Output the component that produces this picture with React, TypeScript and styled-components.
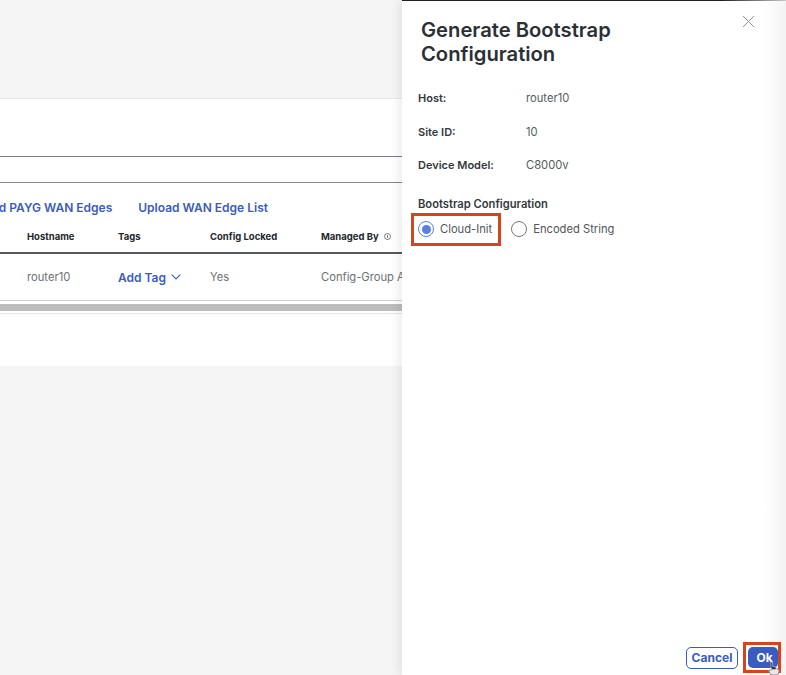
import React from "react";
import styled, { createGlobalStyle } from "styled-components";

const GlobalStyle = createGlobalStyle`
  html, body {
    margin: 0;
    padding: 0;
    background: #f5f5f5;
    font-family: Inter, "Liberation Sans", sans-serif;
  }
  * {
    box-sizing: border-box;
  }
`;

const Page = styled.div`
  display: flex;
  width: 786px;
  height: 675px;
  overflow: hidden;
  background: #f5f5f5;
`;

const Backdrop = styled.div`
  flex: 0 0 402px;
  width: 402px;
  padding-top: 98px;
  overflow: hidden;
`;

const Card = styled.section`
  height: 268px;
  background: #fff;
  border-top: 1px solid #e8e8e8;
`;

const FilterBar = styled.div`
  height: 27px;
  margin-top: 57px;
  border-top: 1px solid #777b90;
  border-bottom: 1px solid #85878f;
`;

const Toolbar = styled.div`
  display: flex;
  justify-content: flex-end;
  gap: 26px;
  width: 268px;
  margin-top: 17px;
  white-space: nowrap;
`;

const ToolLink = styled.a`
  font-size: 12px;
  font-weight: 600;
  line-height: 16px;
  color: #3a5bbf;
`;

const TableGrid = styled.div`
  display: grid;
  grid-template-columns: 27px 91px 92px 111px 150px;
  width: 471px;
`;

const HeadCell = styled.div`
  display: flex;
  align-items: center;
  gap: 5px;
  height: 38px;
  padding-top: 4px;
  font-size: 9.5px;
  font-weight: 700;
  color: #23282e;
  border-bottom: 2px solid #55585d;
  white-space: nowrap;
`;

const BodyCell = styled.div`
  display: flex;
  align-items: center;
  gap: 5px;
  height: 47px;
  font-size: 11.2px;
  color: #6b6f75;
  border-bottom: 1px solid #cfd0d2;
  white-space: nowrap;
`;

const TagLink = styled.span`
  font-size: 12px;
  font-weight: 600;
  color: #3a5bbf;
`;

const ScrollTrack = styled.div`
  height: 13px;
  padding-top: 3px;
  border-bottom: 1px solid #e6e6e6;
`;

const ScrollThumb = styled.div`
  height: 7px;
  background: #bdbdbd;
`;

const Panel = styled.aside`
  flex: 1;
  display: flex;
  flex-direction: column;
  position: relative;
  padding: 18px 0 2px 16px;
  background:
    linear-gradient(to right, #222 0, #222 320px, #c8c8c8 384px) top / 100% 1px no-repeat,
    linear-gradient(to right, #fff 0, #fff 362px, #f3f3f3 384px);
  box-shadow: -4px 0 9px rgba(0, 0, 0, 0.07);
`;

const CloseButton = styled.button`
  position: absolute;
  top: 15px;
  right: 31px;
  width: 13px;
  height: 13px;
  padding: 0;
  border: 0;
  background: none;
  color: #8d9095;
`;

const Title = styled.h2`
  width: 260px;
  margin: 0 0 25px 3px;
  font-size: 20.2px;
  font-weight: 600;
  line-height: 23.5px;
  color: #2b3036;
`;

const InfoRows = styled.dl`
  display: grid;
  grid-template-columns: 108px 1fr;
  grid-auto-rows: 33.5px;
  margin: 0;
  font-size: 11px;
  line-height: 16px;
`;

const InfoLabel = styled.dt`
  font-weight: 600;
  color: #33383e;
`;

const InfoValue = styled.dd`
  margin: 0;
  font-size: 11.2px;
  color: #555a60;
`;

const SectionLabel = styled.div`
  margin-top: 5px;
  font-size: 11.2px;
  font-weight: 600;
  line-height: 16px;
  color: #33383e;
`;

const RadioRow = styled.div`
  display: flex;
  align-items: center;
  gap: 3px;
  margin-top: 1px;
  margin-left: -7px;
`;

const RadioOption = styled.label<{ $marked?: boolean }>`
  display: flex;
  align-items: center;
  gap: 6px;
  height: 33px;
  padding: 0 6px 0 4px;
  font-size: 11.2px;
  color: #51565c;
  border: ${(p) => (p.$marked ? "3px solid #d8441a" : "3px solid transparent")};
`;

const RadioDot = styled.span<{ $checked?: boolean }>`
  position: relative;
  flex: 0 0 16px;
  width: 16px;
  height: 16px;
  border-radius: 50%;
  background: #fff;
  border: 1.5px solid ${(p) => (p.$checked ? "#5b7fe0" : "#72767f")};
  &::after {
    content: "";
    display: ${(p) => (p.$checked ? "block" : "none")};
    position: absolute;
    inset: 2.5px;
    border-radius: 50%;
    background: #5b7fe0;
  }
`;

const Footer = styled.footer`
  display: flex;
  align-items: center;
  justify-content: flex-end;
  gap: 5px;
  margin-top: auto;
  padding-right: 5px;
`;

const OutlineButton = styled.button`
  width: 52px;
  height: 22px;
  padding: 0;
  font: 700 12px Inter, "Liberation Sans", sans-serif;
  color: #3a5bbf;
  background: #fff;
  border: 1.5px solid #3a5bbf;
  border-radius: 5px;
`;

const PrimaryFrame = styled.div`
  position: relative;
  display: flex;
  align-items: center;
  justify-content: flex-end;
  width: 38px;
  height: 31px;
  border: 3px solid #d8441a;
`;

const PrimaryButton = styled.button`
  width: 30px;
  height: 21px;
  padding: 0 0 0 3px;
  font: 700 12px Inter, "Liberation Sans", sans-serif;
  color: #fff;
  background: #3a5bbf;
  border: 0;
  border-radius: 5px;
`;

const Cursor = styled.svg`
  position: absolute;
  top: 16px;
  left: 21px;
  width: 13px;
  height: 15px;
`;

const Chevron = () => (
  <svg width="10" height="6" viewBox="0 0 10 6" fill="none" stroke="#3a5bbf" strokeWidth="1.1">
    <path d="M.7.7 5 5 9.3.7" />
  </svg>
);

const InfoIcon = () => (
  <svg width="7" height="7" viewBox="0 0 7 7" fill="none" stroke="#444" strokeWidth="0.7">
    <circle cx="3.5" cy="3.5" r="3" />
    <path d="M3.5 2v3" />
  </svg>
);

export default function App() {
  return (
    <Page>
      <GlobalStyle />
      <Backdrop>
        <Card>
          <FilterBar />
          <Toolbar>
            <ToolLink>Add PAYG WAN Edges</ToolLink>
            <ToolLink>Upload WAN Edge List</ToolLink>
          </Toolbar>
          <TableGrid>
            <HeadCell />
            <HeadCell>Hostname</HeadCell>
            <HeadCell>Tags</HeadCell>
            <HeadCell>Config Locked</HeadCell>
            <HeadCell>
              Managed By <InfoIcon />
            </HeadCell>
            <BodyCell />
            <BodyCell>router10</BodyCell>
            <BodyCell>
              <TagLink>Add Tag</TagLink>
              <Chevron />
            </BodyCell>
            <BodyCell>Yes</BodyCell>
            <BodyCell>Config-Group Attached</BodyCell>
          </TableGrid>
          <ScrollTrack>
            <ScrollThumb />
          </ScrollTrack>
        </Card>
      </Backdrop>
      <Panel>
        <CloseButton aria-label="Close">
          <svg width="13" height="13" viewBox="0 0 13 13" fill="none" stroke="currentColor" strokeWidth="1">
            <path d="M1 1l11 11M12 1L1 12" />
          </svg>
        </CloseButton>
        <Title>Generate Bootstrap Configuration</Title>
        <InfoRows>
          <InfoLabel>Host:</InfoLabel>
          <InfoValue>router10</InfoValue>
          <InfoLabel>Site ID:</InfoLabel>
          <InfoValue>10</InfoValue>
          <InfoLabel>Device Model:</InfoLabel>
          <InfoValue>C8000v</InfoValue>
        </InfoRows>
        <SectionLabel>Bootstrap Configuration</SectionLabel>
        <RadioRow>
          <RadioOption $marked>
            <RadioDot $checked />
            Cloud-Init
          </RadioOption>
          <RadioOption>
            <RadioDot />
            Encoded String
          </RadioOption>
        </RadioRow>
        <Footer>
          <OutlineButton>Cancel</OutlineButton>
          <PrimaryFrame>
            <PrimaryButton>Ok</PrimaryButton>
            <Cursor viewBox="0 0 13 15">
              <path d="M1.5 9.5 4 14h6.5l1.5-3V8.5l-3-1-2 .5z" fill="#e8e8e8" stroke="#8a8a8a" strokeWidth="1" />
              <path d="M4 1h1.6v4.4l3.4.8v2.3H6L4 7.5z" fill="#2b2b2b" stroke="#fff" strokeWidth="0.5" />
            </Cursor>
          </PrimaryFrame>
        </Footer>
      </Panel>
    </Page>
  );
}
